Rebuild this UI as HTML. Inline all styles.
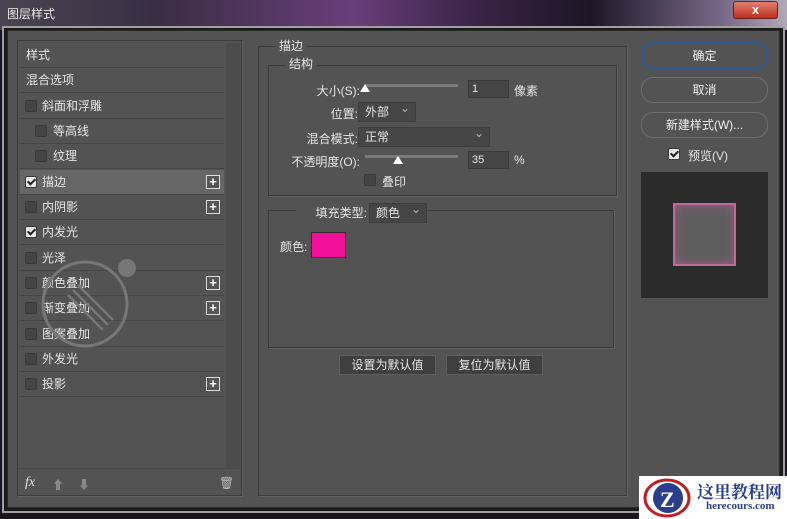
<!DOCTYPE html>
<html><head><meta charset="utf-8"><style>
*{margin:0;padding:0;box-sizing:border-box}
body{width:787px;height:519px;overflow:hidden;background:#1a1420;font-family:"Liberation Sans","Noto Sans CJK SC",sans-serif;font-size:12px;color:#e6e6e6;position:relative}
.a{position:absolute}
.title{left:0;top:0;width:787px;height:30px;background:linear-gradient(90deg,#4a4450 0%,#3a2e44 20%,#6a3e7a 45%,#3b2448 60%,#1e1626 75%,#7a6a8a 92%,#b0a8b8 100%)}
.frame{left:2px;top:26px;width:783px;height:487px;border:2px solid #a0a0a0;background:#1c1c1c}
.dlg{left:7px;top:30px;width:773px;height:478px;background:#535353;border:1px solid #2a2a2a}
.box{border:1px solid #3c3c3c;box-shadow:1px 1px 0 #626262}
.row{position:absolute;left:20px;width:204px;height:25px;border-bottom:1px solid #464646;line-height:24px;font-size:12px}
.cb{position:absolute;top:6px;width:12px;height:12px;background:#444;border:1px solid #3a3a3a;border-radius:2px}
.cb.on{background:#e8e8e8}
.cb.on:after{content:"";position:absolute;left:3px;top:0px;width:3px;height:6px;border:solid #222;border-width:0 2px 2px 0;transform:rotate(45deg)}
.plus{position:absolute;left:186px;top:5px;width:14px;height:14px;border:1px solid #ddd;background:#555;color:#fff;font-size:13px;line-height:11px;text-align:center;font-weight:bold}
.btn{position:absolute;border:1px solid #6e6e6e;border-radius:12px;text-align:center;line-height:24px;font-size:12px;color:#f0f0f0;background:#535353}
.inp{position:absolute;background:#454545;border:1px solid #3a3a3a;height:18px;line-height:16px;padding-left:3px;font-size:11px}
.sel{position:absolute;background:#464646;border:1px solid #3d3d3d;height:20px;line-height:18px;padding-left:6px;font-size:12px}
.sel:after{content:"⌄";position:absolute;right:5px;top:-4px;font-size:12px;color:#bbb}
.lbl{position:absolute;font-size:12px;text-align:right}
.track{position:absolute;height:3px;background:#7a7a7a}
.thumb{position:absolute;width:0;height:0;border-left:5px solid transparent;border-right:5px solid transparent;border-bottom:8px solid #fff}
.gb{position:absolute;background:#535353;padding:0 4px;font-size:12px}
.sbtn{position:absolute;height:20px;background:#3f3f3f;border:1px solid #5f5f5f;text-align:center;line-height:18px;font-size:12px}
</style></head><body>
<div class="a title"></div>
<div class="a" style="left:7px;top:5px;font-size:12px;color:#e8e8e8">图层样式</div>
<div class="a" style="left:733px;top:1px;width:45px;height:18px;background:linear-gradient(#e08070,#c03020);border:1px solid #6a2020;border-radius:3px;color:#fff;text-align:center;font-weight:bold;line-height:16px;font-size:13px">x</div>
<div class="a frame"></div>
<div class="a dlg"></div>

<div class="a box" style="left:17px;top:40px;width:225px;height:456px"></div>
<div class="a" style="left:226px;top:43px;width:14px;height:425px;background:#4c4c4c"></div>
<div class="a" style="left:18px;top:468px;width:223px;height:1px;background:#474747"></div>
<div class="row" style="top:43px;padding-left:6px">样式</div>
<div class="row" style="top:68px;padding-left:6px">混合选项</div>
<div class="row" style="top:94px"><span class="cb" style="left:5px"></span><span style="position:absolute;left:22px">斜面和浮雕</span></div>
<div class="row" style="top:119px"><span class="cb" style="left:15px"></span><span style="position:absolute;left:33px">等高线</span></div>
<div class="row" style="top:144px"><span class="cb" style="left:15px"></span><span style="position:absolute;left:33px">纹理</span></div>
<div class="row" style="top:170px;background:#666"><span class="cb on" style="left:5px"></span><span style="position:absolute;left:22px">描边</span><span class="plus">+</span></div>
<div class="row" style="top:195px"><span class="cb" style="left:5px"></span><span style="position:absolute;left:22px">内阴影</span><span class="plus">+</span></div>
<div class="row" style="top:220px"><span class="cb on" style="left:5px"></span><span style="position:absolute;left:22px">内发光</span></div>
<div class="row" style="top:246px"><span class="cb" style="left:5px"></span><span style="position:absolute;left:22px">光泽</span></div>
<div class="row" style="top:271px"><span class="cb" style="left:5px"></span><span style="position:absolute;left:22px">颜色叠加</span><span class="plus">+</span></div>
<div class="row" style="top:296px"><span class="cb" style="left:5px"></span><span style="position:absolute;left:22px">渐变叠加</span><span class="plus">+</span></div>
<div class="row" style="top:322px"><span class="cb" style="left:5px"></span><span style="position:absolute;left:22px">图案叠加</span></div>
<div class="row" style="top:347px"><span class="cb" style="left:5px"></span><span style="position:absolute;left:22px">外发光</span></div>
<div class="row" style="top:372px"><span class="cb" style="left:5px"></span><span style="position:absolute;left:22px">投影</span><span class="plus">+</span></div>
<svg class="a" style="left:38px;top:255px" width="100" height="100"><circle cx="47" cy="49" r="42" fill="none" stroke="#777" stroke-width="3"/><circle cx="89" cy="13" r="9" fill="#777"/><g stroke="#777" stroke-width="2.5"><line x1="30" y1="40" x2="65" y2="75"/><line x1="35" y1="35" x2="70" y2="70"/><line x1="40" y1="30" x2="75" y2="65"/></g></svg>
<div class="a" style="left:25px;top:475px;font-style:italic;font-family:'Liberation Serif',serif;font-size:14px">fx</div>
<div class="a" style="left:52px;top:476px;color:#888;font-size:12px">⬆</div>
<div class="a" style="left:78px;top:476px;color:#888;font-size:12px">⬇</div>
<div class="a" style="left:219px;top:476px;color:#bbb;font-size:12px">🗑</div>

<div class="a box" style="left:258px;top:46px;width:369px;height:450px"></div>
<div class="gb" style="left:275px;top:37px">描边</div>
<div class="a box" style="left:268px;top:65px;width:349px;height:131px"></div>
<div class="gb" style="left:285px;top:55px">结构</div>
<div class="lbl" style="left:280px;width:80px;top:82px">大小(S):</div>
<div class="track" style="left:365px;top:84px;width:93px"></div>
<div class="thumb" style="left:360px;top:84px"></div>
<div class="inp" style="left:468px;top:80px;width:41px">1</div>
<div class="a" style="left:514px;top:82px">像素</div>
<div class="lbl" style="left:280px;width:78px;top:105px">位置:</div>
<div class="sel" style="left:358px;top:102px;width:58px">外部</div>
<div class="lbl" style="left:270px;width:88px;top:130px">混合模式:</div>
<div class="sel" style="left:358px;top:127px;width:132px">正常</div>
<div class="lbl" style="left:270px;width:90px;top:153px">不透明度(O):</div>
<div class="track" style="left:365px;top:155px;width:93px"></div>
<div class="thumb" style="left:393px;top:156px"></div>
<div class="inp" style="left:468px;top:151px;width:41px">35</div>
<div class="a" style="left:514px;top:153px">%</div>
<div class="cb" style="left:364px;top:174px"></div>
<div class="a" style="left:382px;top:173px">叠印</div>

<div class="a box" style="left:268px;top:210px;width:346px;height:138px"></div>
<div class="gb" style="left:296px;top:204px;width:75px;text-align:right">填充类型:</div>
<div class="sel" style="left:369px;top:203px;width:58px">颜色</div>
<div class="a" style="left:280px;top:238px">颜色:</div>
<div class="a" style="left:311px;top:232px;width:35px;height:26px;background:#f0109a;border:1px solid #3a2a30"></div>
<div class="sbtn" style="left:339px;top:355px;width:97px">设置为默认值</div>
<div class="sbtn" style="left:446px;top:355px;width:97px">复位为默认值</div>

<div class="btn" style="left:641px;top:42px;width:127px;height:27px;border:2px solid #2f5a9a">确定</div>
<div class="btn" style="left:641px;top:77px;width:127px;height:26px">取消</div>
<div class="btn" style="left:641px;top:112px;width:127px;height:26px">新建样式(W)...</div>
<div class="cb on" style="left:668px;top:148px"></div>
<div class="a" style="left:688px;top:147px">预览(V)</div>
<div class="a" style="left:641px;top:172px;width:127px;height:126px;background:#2b2b2b"></div>
<div class="a" style="left:673px;top:203px;width:63px;height:63px;background:#5e5e5e;border:2px solid #c06a98;box-shadow:inset 0 0 10px #a05a88"></div>

<div class="a" style="left:639px;top:476px;width:148px;height:43px;background:#fff"></div>
<svg class="a" style="left:641px;top:477px" width="52" height="42"><ellipse cx="26" cy="21" rx="22" ry="18" fill="none" stroke="#c02020" stroke-width="3"/><circle cx="27" cy="21" r="15" fill="#2a3e8e"/><text x="19" y="30" fill="#fff" font-size="22" font-weight="bold" font-family="Liberation Serif">Z</text></svg>
<div class="a" style="left:697px;top:478px;color:#2a3e8e;font-weight:bold;font-size:17px;font-family:'Liberation Serif','Noto Serif CJK SC',serif">这里教程网</div>
<div class="a" style="left:706px;top:500px;color:#2a3e8e;font-weight:bold;font-size:11px;font-family:'Liberation Serif',serif">herecours.com</div>
</body></html>
